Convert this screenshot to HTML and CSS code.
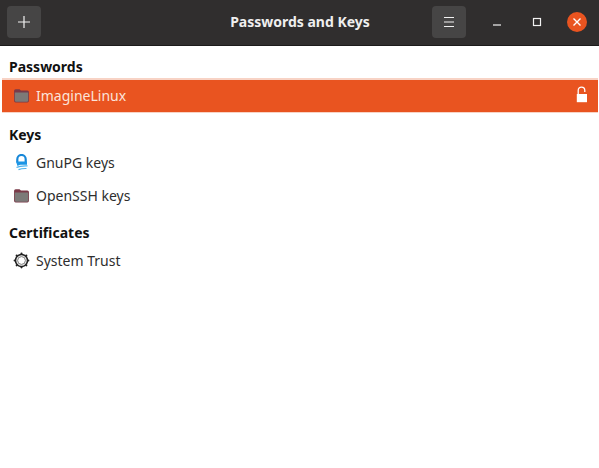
FILE: index.html
```html
<!DOCTYPE html>
<html lang="en">
<head>
<meta charset="utf-8">
<title>Passwords and Keys</title>
<link rel="stylesheet" href="styles.css">
</head>
<body>
<div class="window">
  <header class="titlebar">
    <div class="side">
      <button class="hbtn" aria-label="Add">
        <svg width="14" height="14" viewBox="0 0 14 14"><path d="M7 1v12M1 7h12" stroke="#f2f2f2" stroke-width="1.2" fill="none"/></svg>
      </button>
    </div>
    <div class="title">Passwords and Keys</div>
    <div class="side end">
      <button class="hbtn" aria-label="Menu">
        <svg width="12" height="12" viewBox="0 0 12 12"><path d="M1 1.5h10M1 6h10M1 10.5h10" stroke="#f2f2f2" stroke-width="1" fill="none"/></svg>
      </button>
      <div class="winctl">
        <svg width="10" height="10" viewBox="0 0 10 10"><path d="M1 8h8" stroke="#f2f2f2" stroke-width="1.2" fill="none"/></svg>
      </div>
      <div class="winctl">
        <svg width="10" height="10" viewBox="0 0 10 10"><rect x="1.5" y="1.5" width="7" height="7" stroke="#f2f2f2" stroke-width="1.2" fill="none"/></svg>
      </div>
      <div class="winctl close">
        <svg width="10" height="10" viewBox="0 0 10 10"><path d="M1.5 1.5l7 7M8.5 1.5l-7 7" stroke="#fff" stroke-width="1.4" fill="none"/></svg>
      </div>
    </div>
  </header>
  <main class="list">
    <h2 class="heading first">Passwords</h2>
    <div class="row selected">
      <svg class="icon" width="17" height="17" viewBox="0 0 16 16"><use href="#folder"/></svg>
      <span class="label">ImagineLinux</span>
      <svg class="lock" width="14" height="18" viewBox="0 0 14 18"><path d="M3.2 8V4.4a3.3 3.3 0 0 1 6.6 0V6" stroke="#fff" stroke-width="1.3" fill="none"/><rect x="1.8" y="8" width="10.2" height="8.2" fill="#fff"/></svg>
    </div>
    <h2 class="heading">Keys</h2>
    <div class="row">
      <svg class="icon" width="17" height="18" viewBox="0 0 16 18">
        <path d="M3.8 8.5V5.2a4.2 4.2 0 0 1 8.4 0v3" stroke="#1787d8" stroke-width="2.2" fill="none"/>
        <path d="M2.5 7.5h11v3.2H8c-1.5 0-2.6.5-4 1.3z" fill="#1d96e6"/>
        <path d="M3 13.5c3-1.6 6-1.8 11-1.6M5 15.6c2.5-1 5-1.2 8-1.1" stroke="#4fb4ee" stroke-width="1.2" fill="none"/>
      </svg>
      <span class="label">GnuPG keys</span>
    </div>
    <div class="row">
      <svg class="icon" width="17" height="17" viewBox="0 0 16 16"><use href="#folder"/></svg>
      <span class="label">OpenSSH keys</span>
    </div>
    <h2 class="heading next">Certificates</h2>
    <div class="row">
      <svg class="icon" width="17" height="17" viewBox="0 0 17 17">
        <circle cx="8.5" cy="8.5" r="6" fill="#fff" stroke="#222" stroke-width="1.6"/>
        <circle cx="8.5" cy="8.5" r="3.9" fill="none" stroke="#777" stroke-width="1"/>
        <circle cx="8.5" cy="1.7" r="1.1" fill="#222"/><circle cx="8.5" cy="15.3" r="1.1" fill="#222"/>
        <circle cx="1.7" cy="8.5" r="1.1" fill="#222"/><circle cx="15.3" cy="8.5" r="1.1" fill="#222"/>
        <circle cx="3.7" cy="3.7" r="1.1" fill="#222"/><circle cx="13.3" cy="3.7" r="1.1" fill="#222"/>
        <circle cx="3.7" cy="13.3" r="1.1" fill="#222"/><circle cx="13.3" cy="13.3" r="1.1" fill="#222"/>
      </svg>
      <span class="label">System Trust</span>
    </div>
  </main>
</div>
<svg class="defs" width="0" height="0" aria-hidden="true">
  <symbol id="folder" viewBox="0 0 16 16">
    <path d="M1 3.5a1.5 1.5 0 0 1 1.5-1.5h3.6l1.4 1.2h6a1.5 1.5 0 0 1 1.5 1.5v8.3a1.5 1.5 0 0 1-1.5 1.5h-11A1.5 1.5 0 0 1 1 13z" fill="#7a3a48"/>
    <path d="M1.7 5.2h12.6v7.6a1 1 0 0 1-1 1H2.7a1 1 0 0 1-1-1z" fill="#7c7a78"/>
  </symbol>
</svg>
</body>
</html>
```
FILE: styles.css
```css
* { box-sizing: border-box; }
html, body { margin: 0; height: 100%; background: #fff; }
body { font-family: "Noto Sans", "Open Sans", sans-serif; font-size: 14px; color: #2e2e2e; overflow: hidden; }
.window { width: 599px; height: 468px; display: flex; flex-direction: column; }
.titlebar {
  height: 46px; flex: none; display: grid; grid-template-columns: 1fr auto 1fr; align-items: center;
  padding: 0 12px 2px 7px; background: #302e2e; border-bottom: 1px solid #1c1b1b;
}
.side { display: flex; align-items: center; }
.end { justify-content: flex-end; }
.hbtn {
  width: 34px; height: 32px; padding: 0; border: 0; border-radius: 4px;
  background: #464545; display: flex; align-items: center; justify-content: center;
}
.title { color: #efefef; font-weight: 700; font-size: 14px; padding-left: 6px; }
.winctl { width: 20px; height: 20px; margin-left: 20px; display: flex; align-items: center; justify-content: center; }
.end .hbtn + .winctl { margin-left: 21px; }
.close { border-radius: 50%; background: #e95420; }
.list { flex: 1; display: flex; flex-direction: column; }
.heading { margin: 12px 0 1px; padding: 0 9px; font-size: 14px; font-weight: 700; line-height: 20px; color: #111; }
.heading.first { margin-top: 11px; }
.heading.next { margin-top: 11px; }
.row { height: 33px; flex: none; display: flex; align-items: center; padding: 0 9px 0 13px; }
.icon { flex: none; margin-right: 6px; }
.label { flex: 1; }
.selected {
  height: 35px; margin: 0 1px 0 2px; padding: 0 9px 2px 11px; color: #fbe3d9; background: #e95420;
  border-top: 2px solid #f8d3c5; border-bottom: 1px solid #f8d3c5;
}
.lock { flex: none; }
.defs { position: absolute; }
```
